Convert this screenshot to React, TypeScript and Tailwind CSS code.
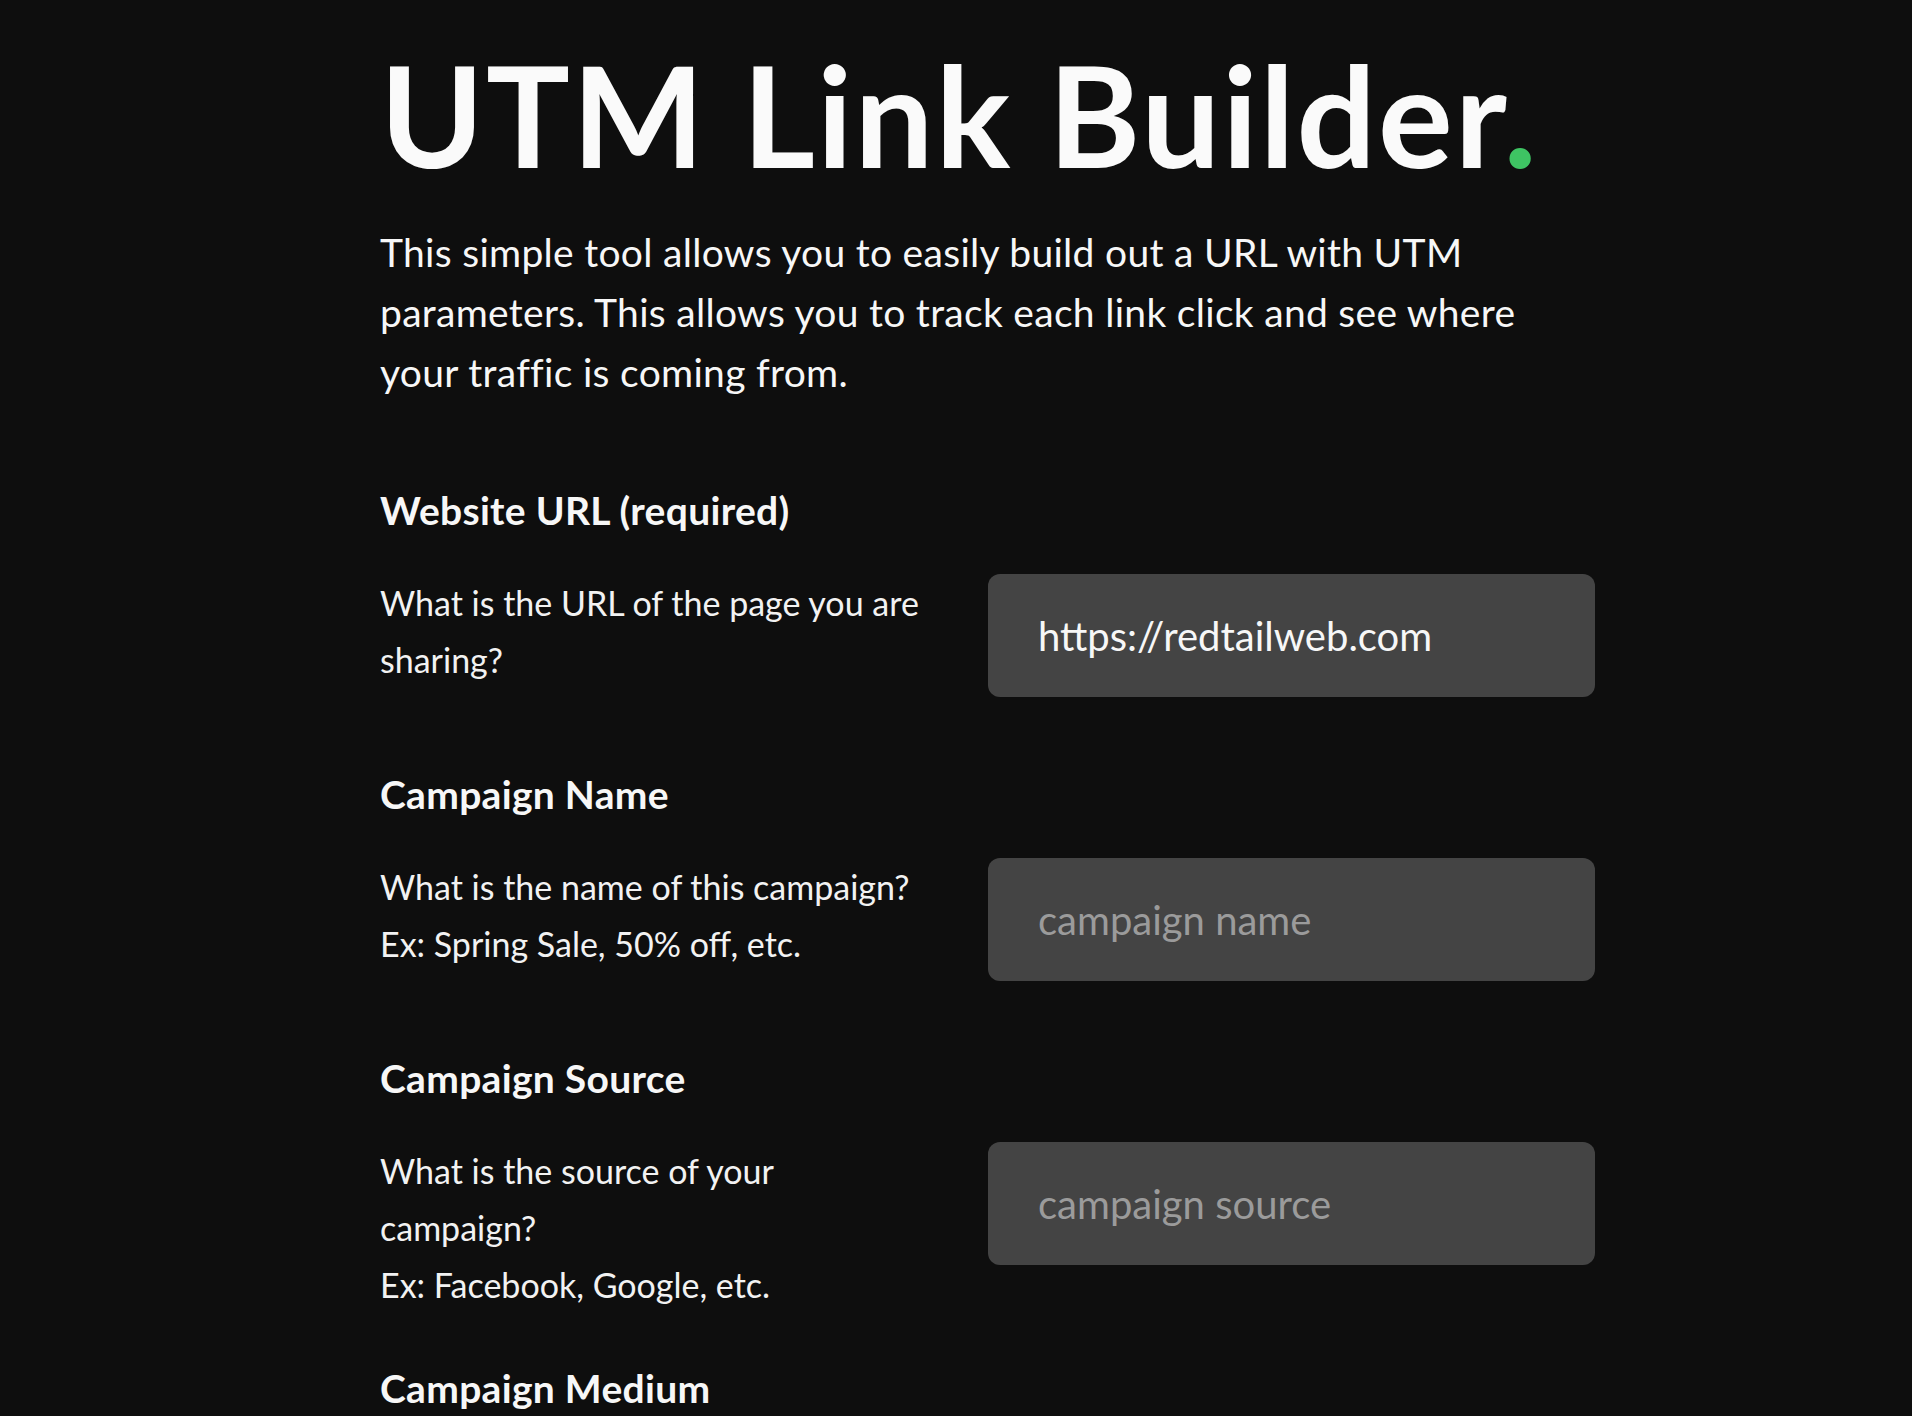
import React, { useState } from 'react';

type Field = {
    key: string;
    label: string;
    lines: string[];
    placeholder: string;
};

const FIELDS: Field[] = [
    { key: 'url', label: 'Website URL (required)', lines: ['What is the URL of the page you are', 'sharing?'], placeholder: 'https://example.com' },
    { key: 'name', label: 'Campaign Name', lines: ['What is the name of this campaign?', 'Ex: Spring Sale, 50% off, etc.'], placeholder: 'campaign name' },
    { key: 'source', label: 'Campaign Source', lines: ['What is the source of your', 'campaign?', 'Ex: Facebook, Google, etc.'], placeholder: 'campaign source' },
    { key: 'medium', label: 'Campaign Medium', lines: ['What is the medium of your', 'campaign?', 'Ex: email, cpc, banner, etc.'], placeholder: 'campaign medium' },
];

// intro copy, broken where the original page wraps it
const INTRO = [
    'This simple tool allows you to easily build out a URL with UTM',
    'parameters. This allows you to track each link click and see where',
    'your traffic is coming from.',
];

const App: React.FC = () => {
    const [values, setValues] = useState<Record<string, string>>({ url: 'https://redtailweb.com' });

    return (
        <div className="min-h-screen bg-[#0e0e0e] text-[#f7f7f7] font-['Lato',sans-serif] overflow-hidden">
            <div className="ml-[380px] w-[1215px] pt-[44px] pb-24">
                <h1 className="text-[140px] leading-none font-bold tracking-[2px] text-[#fafafa] whitespace-nowrap">
                    UTM Link Builder<span className="text-[#3ec463]">.</span>
                </h1>

                <p className="mt-[38px] text-[39px] leading-[60px] tracking-[0.3px]">
                    {INTRO.map((l, i) => (
                        <span key={i} className="block whitespace-nowrap">{l}</span>
                    ))}
                </p>

                <div className="mt-[84px] flex flex-col gap-[51px]">
                    {FIELDS.map((f) => (
                        <section key={f.key}>
                            <h2 className="text-[39px] leading-[48px] font-bold tracking-[0.3px] mb-[40px]">{f.label}</h2>
                            <div className="grid grid-cols-[608px_607px] items-start">
                                <p className="text-[34px] leading-[57px] text-[#f2f2f2]">
                                    {f.lines.map((l, i) => (
                                        <span key={i} className="block whitespace-nowrap">{l}</span>
                                    ))}
                                </p>
                                <input
                                    type="text"
                                    value={values[f.key] ?? ''}
                                    placeholder={f.placeholder}
                                    onChange={(e) => setValues((prev) => ({ ...prev, [f.key]: e.target.value }))}
                                    className="mb-[22px] h-[123px] w-full rounded-[12px] bg-[#444444] px-[50px] text-[40px] text-[#f7f7f7] placeholder:text-[#9b9b9b] outline-none"
                                />
                            </div>
                        </section>
                    ))}
                </div>
            </div>
        </div>
    );
};

export default App;
